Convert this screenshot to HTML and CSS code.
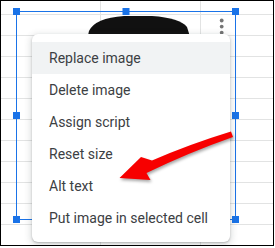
FILE: index.html
```html
<!DOCTYPE html>
<html lang="en">
<head>
    <meta charset="UTF-8">
    <title>Image menu</title>
    <link rel="stylesheet" href="styles.css">
</head>
<body>
    <div class="sheet">
        <!-- picture in the cell with its selection frame -->
        <svg class="picture" width="274" height="246" viewBox="0 0 274 246">
            <path d="M87,40 L89,31 Q95,18 124,16 L152,16 Q180,18 187,27 L191,40 Z" fill="#111"/>
            <rect x="16.5" y="11.5" width="219" height="208" fill="none" stroke="#1a73e8" stroke-width="1"/>
            <rect x="13" y="8" width="7" height="7" fill="#1a73e8"/>
            <rect x="122.5" y="8" width="7" height="7" fill="#1a73e8"/>
            <rect x="232" y="8" width="7" height="7" fill="#1a73e8"/>
            <rect x="13" y="112" width="7" height="7" fill="#1a73e8"/>
            <rect x="232" y="112" width="7" height="7" fill="#1a73e8"/>
            <rect x="13" y="216" width="7" height="7" fill="#1a73e8"/>
            <rect x="232" y="216" width="7" height="7" fill="#1a73e8"/>
            <circle cx="221.7" cy="20.5" r="1.9" fill="#757575"/>
            <circle cx="221.7" cy="26.6" r="1.9" fill="#757575"/>
            <circle cx="221.7" cy="32.7" r="1.9" fill="#757575"/>
        </svg>

        <ul class="menu">
            <li class="menu-item active">Replace image</li>
            <li class="menu-item">Delete image</li>
            <li class="menu-item">Assign script</li>
            <li class="menu-item">Reset size</li>
            <li class="menu-item">Alt text</li>
            <li class="menu-item">Put image in selected cell</li>
        </ul>

        <svg class="arrow" width="274" height="246" viewBox="0 0 274 246">
            <path d="M231,131.5 L233,137 Q190,152 146.5,173 L150.5,180 L119.5,178 L141,157 L152,160.5 Q190,144 231,131.5 Z" fill="#f70000"/>
        </svg>
    </div>
</body>
</html>
```

FILE: styles.css
```css
body {
    margin: 0;
    background: #fff;
    font-family: Roboto, "Liberation Sans", sans-serif;
}
.sheet {
    position: relative;
    width: 272px;
    height: 244px;
    border: 1px solid #000;
    background-color: #fff;
    background-image:
        linear-gradient(to right, #e2e3e3 1px, transparent 1px),
        linear-gradient(to bottom, #e2e3e3 1px, transparent 1px);
    background-size: 100px 100%, 100% 21px;
    background-position: 99px 0, 0 13px;
    overflow: hidden;
}
.picture,
.arrow {
    position: absolute;
    left: -1px;
    top: -1px;
}
.arrow {
    filter: drop-shadow(1px 2px 1.5px rgba(0, 0, 0, 0.35));
}
.menu {
    position: absolute;
    left: 31px;
    top: 33px;
    width: 198px;
    margin: 0;
    padding: 8px 0;
    list-style: none;
    background: #fff;
    border-radius: 6px;
    box-shadow: 0 2px 6px 2px rgba(60, 64, 67, 0.15), 0 1px 2px rgba(60, 64, 67, 0.3);
}
.menu-item {
    height: 32px;
    line-height: 32px;
    padding-left: 17px;
    font-size: 14px;
    color: #3c4043;
    white-space: nowrap;
}
.menu-item.active {
    background: #f1f3f4;
}
```
